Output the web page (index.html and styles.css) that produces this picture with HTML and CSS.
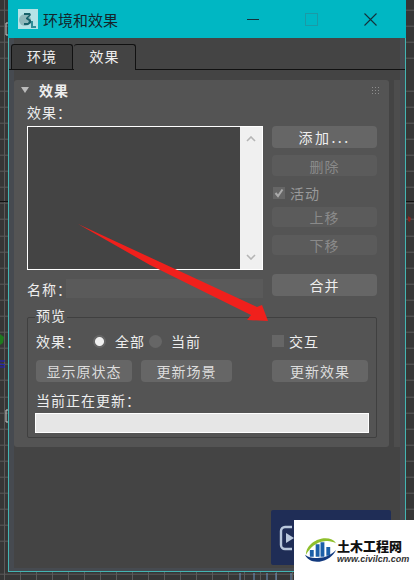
FILE: index.html
```html
<!DOCTYPE html>
<html lang="zh">
<head>
    <meta charset="UTF-8">
    <meta name="viewport" content="width=device-width, initial-scale=1.0">
    <title>环境和效果</title>
    <link rel="stylesheet" href="styles.css">
</head>
<body>
    <div class="window">
        <div class="titlebar">
            <svg class="app-icon" width="20" height="20" viewBox="0 0 20 20">
                <rect width="20" height="20" fill="#b5e3e6"/>
                <circle cx="7" cy="11" r="6" fill="#8fb8bb"/>
                <path d="M6 4h6l1 2-3 3 3 2v3l-3 2H6v-2h4l1-2-3-2v-1l3-3H6z" fill="#17616a"/>
                <path d="M13 12h2v5h3v2h-5z" fill="#2f8f98"/>
            </svg>
            <span class="title">环境和效果</span>
            <span class="win-min"></span>
            <span class="win-max"></span>
            <svg class="win-close" width="13" height="13" viewBox="0 0 13 13">
                <path d="M.5.5l12 12M12.5.5l-12 12" stroke="#14313a" stroke-width="1.1" fill="none"/>
            </svg>
        </div>

        <div class="tabs">
            <div class="tab">环境</div>
            <div class="tab active">效果</div>
        </div>

        <div class="content">
            <div class="panel">
                <div class="panel-head">
                    <span class="triangle"></span>
                    <strong>效果</strong>
                    <span class="grip"></span>
                </div>
                <div class="label-line">效果：</div>

                <div class="effects">
                    <div class="effects-left">
                        <div class="listbox">
                            <div class="list-inner"></div>
                            <div class="list-scroll">
                                <svg width="10" height="6" viewBox="0 0 10 6"><path d="M1 5l4-4 4 4" stroke="#b5b5b5" stroke-width="1.6" fill="none"/></svg>
                                <svg width="10" height="6" viewBox="0 0 10 6"><path d="M1 1l4 4 4-4" stroke="#b5b5b5" stroke-width="1.6" fill="none"/></svg>
                            </div>
                        </div>
                        <div class="name-row">
                            <span class="name-label">名称：</span>
                            <div class="name-input"></div>
                        </div>
                    </div>
                    <div class="effects-right">
                        <button class="btn btn-add">添加...</button>
                        <button class="btn btn-off btn-del">删除</button>
                        <div class="active-row">
                            <svg class="check" width="12" height="12" viewBox="0 0 12 12">
                                <rect width="12" height="12" fill="#666"/>
                                <path d="M2.5 6l2.5 3 4.5-6.5" stroke="#aaa" stroke-width="2" fill="none"/>
                            </svg>
                            <span>活动</span>
                        </div>
                        <button class="btn btn-off btn-up">上移</button>
                        <button class="btn btn-off btn-down">下移</button>
                        <button class="btn btn-merge">合并</button>
                    </div>
                </div>

                <div class="group">
                    <div class="legend">预览</div>
                    <div class="preview-row">
                        <span class="preview-label">效果：</span>
                        <span class="radio on"></span>
                        <span class="radio-text">全部</span>
                        <span class="radio second"></span>
                        <span class="radio-text">当前</span>
                        <span class="box"></span>
                        <span class="box-text">交互</span>
                    </div>
                    <div class="preview-buttons">
                        <button class="btn btn-show">显示原状态</button>
                        <button class="btn btn-scene">更新场景</button>
                        <button class="btn btn-update">更新效果</button>
                    </div>
                    <div class="updating">当前正在更新：</div>
                    <div class="progress"></div>
                </div>
            </div>
            <div class="strip"></div>
        </div>
    </div>

    <!-- viewport marks behind the dialog -->
    <svg class="marks" width="414" height="580" viewBox="0 0 414 580">
        <path d="M8 23H6v12h2M8 410H6v12h2" stroke="#ccc" fill="none"/>
        <path d="M0 334l4 3-1 6-3 2z" fill="#1f7a1f"/>
        <path d="M0 361h5M0 364l5 1M0 367h5" stroke="#1c1cc8"/>
        <path d="M408 216l3 2-1 4-2-1z" fill="#8c2420"/>
        <path d="M240 573v7M254 573v7M267 573v7M276 573v7M291 573v7" stroke="#6f93bd"/>
    </svg>

    <svg class="arrow" width="414" height="580" viewBox="0 0 414 580">
        <path d="M78 224L257 307l5-2 6 16-21-1 4-5L150 265z" fill="#f0201c"/>
    </svg>

    <div class="promo">
        <svg width="16" height="26" viewBox="0 0 16 26">
            <path d="M13 2H6a4 4 0 0 0-4 4v14a4 4 0 0 0 4 4h7" stroke="#b9c8dc" stroke-width="2.4" fill="none"/>
            <path d="M7 8l8 5-8 5z" fill="#b9c8dc"/>
        </svg>
    </div>
    <div class="stamp">
        <svg width="32" height="26" viewBox="0 0 33 26">
            <path d="M1 18C1 8 12 1 21 1c5 0 9 2 11 5-4-2-8-3-12-2C11 5 5 11 1 18z" fill="#8fbf2c"/>
            <path d="M11 7h4v13h-4zM16 5h4v15h-4zM5 13h4v7H5zM22 10h4v9h-4z" fill="#1c5fa8"/>
            <path d="M0 18c2 5 8 8 15 7 8-1 14-6 17-12-5 5-11 8-17 8-6 1-11 0-15-3z" fill="#12397e"/>
        </svg>
        <div class="stamp-text">
            <div class="stamp-name">土木工程网</div>
            <div class="stamp-url">www.civilcn.com</div>
        </div>
    </div>
</body>
</html>
```

FILE: styles.css
```css
body {
    margin: 0;
    width: 414px;
    height: 580px;
    overflow: hidden;
    font-family: "Noto Sans CJK SC", "Liberation Sans", sans-serif;
    font-size: 14px;
    color: #eee;
    background-color: #363636;
    background-image:
        linear-gradient(#111, #111),
        repeating-linear-gradient(to right, transparent 0 4px, #5a5a5a 4px 5px, transparent 5px 16px),
        repeating-linear-gradient(to bottom, transparent 0 15.1px, #5a5a5a 15.1px 16.1px);
    background-size: 100% 1px, auto, auto;
    background-position: 0 201px, 0 0, 0 -5.3px;
    background-repeat: no-repeat, repeat, repeat;
}
.window {
    box-sizing: border-box;
    width: 398px;
    height: 572px;
    margin-left: 8px;
    background: #444;
    border: 1px solid #43b5b3;
    border-top: none;
    box-shadow: inset 5px 0 0 #464a50, inset -5px 0 0 #464a50, inset 0 -3px 0 #464a50;
}
.titlebar {
    display: flex;
    align-items: center;
    height: 38px;
    margin: 0 -1px;
    background: #00b7c3;
    color: #14262c;
}
.app-icon {
    margin-left: 10px;
}
.title {
    margin-left: 5px;
    width: 204px;
    font-size: 15px;
}
.win-min {
    width: 12px;
    height: 1px;
    background: #14313a;
}
.win-max {
    width: 11px;
    height: 11px;
    margin-left: 46px;
    border: 1px solid #1b9aa6;
}
.win-close {
    margin-left: 46px;
}
.tabs {
    display: flex;
    align-items: flex-end;
    height: 32px;
    padding-left: 2px;
    box-sizing: border-box;
    border-bottom: 1px solid #111;
}
.tab {
    box-sizing: border-box;
    width: 62px;
    height: 25px;
    line-height: 23px;
    text-align: center;
    letter-spacing: 1px;
    background: #3a3a3a;
    border: 1px solid #111;
    border-bottom: none;
    border-radius: 3px 3px 0 0;
}
.tab.active {
    height: 26px;
    margin-left: 1px;
    margin-bottom: -1px;
    background: #444;
    border-left: none;
}
.content {
    display: flex;
    margin-top: 10px;
}
.panel {
    box-sizing: border-box;
    width: 375px;
    height: 367px;
    margin-left: 5px;
    padding: 0 12px 0 13px;
    background: #545454;
    border-radius: 3px;
}
.strip {
    width: 6px;
    height: 367px;
    margin-left: 5px;
    background: #4d4d4d;
}
.panel-head {
    display: flex;
    align-items: center;
    height: 20px;
}
.panel-head strong {
    margin-left: 10px;
    letter-spacing: 1px;
    font-size: 14px;
}
.triangle {
    width: 0;
    height: 0;
    margin-left: -6px;
    border-left: 4px solid transparent;
    border-right: 4px solid transparent;
    border-top: 6px solid #bbb;
}
.grip {
    width: 9px;
    height: 9px;
    margin-left: auto;
    margin-right: -3px;
    background-image: radial-gradient(circle, #8e8e8e 0 1px, transparent 1px);
    background-size: 3px 3px;
}
.label-line {
    height: 26px;
    line-height: 24px;
    letter-spacing: 1px;
}
.effects {
    display: flex;
    gap: 9px;
}
.effects-left {
    width: 236px;
}
.effects-right {
    width: 105px;
}
.listbox {
    display: flex;
    box-sizing: border-box;
    height: 144px;
    border: 1px solid #fff;
}
.list-inner {
    flex: 1;
    background: #444;
}
.list-scroll {
    display: flex;
    flex-direction: column;
    justify-content: space-between;
    align-items: center;
    box-sizing: border-box;
    width: 22px;
    padding: 9px 0;
    background: #f0f0f0;
}
.name-row {
    display: flex;
    align-items: center;
    height: 19px;
    margin-top: 9px;
}
.name-label {
    width: 39px;
    letter-spacing: 1px;
    white-space: nowrap;
}
.name-input {
    flex: 1;
    height: 19px;
    background: #5a5a5a;
}
button.btn {
    display: block;
    box-sizing: border-box;
    padding: 0;
    border: none;
    border-radius: 4px;
    background: #666;
    color: #eee;
    font-family: inherit;
    font-size: 14px;
    letter-spacing: 1px;
    line-height: 20px;
    width: 105px;
    height: 22px;
}
button.btn-add {
    letter-spacing: 2.5px;
}
button.btn-off {
    background: #5b5b5b;
    color: #8a8a8a;
}
.btn-del {
    margin-top: 7px;
}
button.btn-del {
    height: 21px;
}
.active-row {
    display: flex;
    align-items: center;
    gap: 5px;
    height: 16px;
    margin-top: 9px;
    padding-left: 1px;
    color: #999;
    letter-spacing: 1px;
}
button.btn-up, button.btn-down {
    height: 20px;
}
.btn-up {
    margin-top: 6px;
}
.btn-down {
    margin-top: 8px;
}
.btn-merge {
    margin-top: 19px;
}
.group {
    box-sizing: border-box;
    width: 350px;
    height: 121px;
    margin-top: 19px;
    padding-left: 8px;
    border: 1px solid #404040;
    border-radius: 2px;
}
.legend {
    width: fit-content;
    height: 20px;
    margin-top: -13px;
    padding: 0 1px;
    margin-left: -1px;
    line-height: 20px;
    letter-spacing: 1px;
    background: #545454;
}
.preview-row {
    display: flex;
    align-items: center;
    height: 16px;
    margin-top: 8px;
    letter-spacing: 1px;
}
.preview-label {
    width: 57px;
    white-space: nowrap;
}
.radio {
    flex: none;
    width: 13px;
    height: 13px;
    border-radius: 50%;
    background: #666;
}
.radio.on {
    background: radial-gradient(circle, #f0f0f0 0 4px, #666 5px);
}
.radio.second {
    margin-left: 6px;
}
.radio-text {
    width: 28px;
    margin-left: 9px;
    white-space: nowrap;
}
.box {
    flex: none;
    width: 12px;
    height: 12px;
    margin-left: 73px;
    background: #666;
}
.box-text {
    margin-left: 5px;
}
.preview-buttons {
    display: flex;
    margin-top: 11px;
}
button.btn-show, button.btn-update {
    width: 96px;
}
button.btn-scene {
    width: 91px;
    margin-left: 9px;
}
button.btn-update {
    margin-left: 40px;
}
.preview-buttons .btn {
    color: #ddd;
}
.updating {
    height: 16px;
    line-height: 16px;
    margin-top: 10px;
    letter-spacing: 1px;
    white-space: nowrap;
}
.progress {
    box-sizing: border-box;
    width: 334px;
    height: 20px;
    margin-top: 5px;
    margin-left: -1px;
    background: #e6e6e6;
    border: 1px solid #fff;
}
.marks, .arrow {
    position: absolute;
    left: 0;
    top: 0;
}
.promo {
    position: absolute;
    left: 271px;
    top: 510px;
    width: 120px;
    height: 55px;
    padding: 15px 0 0 8px;
    box-sizing: border-box;
    background: #1f2d56;
    border-radius: 2px;
}
.stamp {
    position: absolute;
    left: 294px;
    top: 520px;
    display: flex;
    box-sizing: border-box;
    width: 120px;
    height: 60px;
    padding: 17px 0 0 11px;
    background: #fff;
}
.stamp-text {
    margin-top: 2px;
}
.stamp-name {
    font-size: 13px;
    font-weight: 900;
    line-height: 13px;
    color: #111;
    white-space: nowrap;
}
.stamp-url {
    margin-top: 3px;
    font-family: "Liberation Sans", sans-serif;
    font-size: 9px;
    font-style: italic;
    font-weight: bold;
    line-height: 9px;
    color: #333;
    white-space: nowrap;
}
```
